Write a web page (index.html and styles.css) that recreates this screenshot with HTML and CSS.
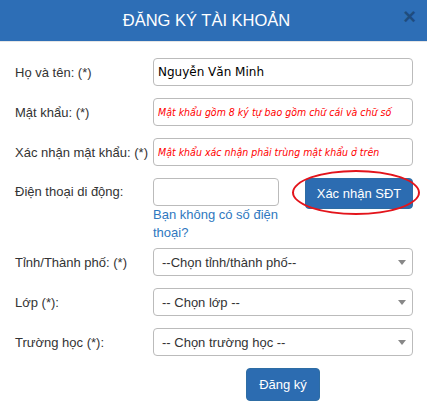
FILE: index.html
```html
<!DOCTYPE html>
<html lang="vi">
<head>
  <meta charset="UTF-8">
  <title>Đăng ký tài khoản</title>
  <link rel="stylesheet" href="styles.css">
</head>
<body>
  <div class="modal">
    <div class="modal-header">
      <h4 class="modal-title">ĐĂNG KÝ TÀI KHOẢN</h4>
      <button class="close" type="button">&times;</button>
    </div>
    <form class="modal-body">
      <div class="form-row">
        <label>Họ và tên: (*)</label>
        <div class="control">
          <input class="field" type="text" value="Nguyễn Văn Minh">
        </div>
      </div>
      <div class="form-row">
        <label>Mật khẩu: (*)</label>
        <div class="control">
          <input class="field hint" type="password" placeholder="Mật khẩu gồm 8 ký tự bao gồm chữ cái và chữ số">
        </div>
      </div>
      <div class="form-row">
        <label>Xác nhận mật khẩu: (*)</label>
        <div class="control">
          <input class="field hint" type="password" placeholder="Mật khẩu xác nhận phải trùng mật khẩu ở trên">
        </div>
      </div>
      <div class="form-row phone-row">
        <label>Điện thoại di động:</label>
        <div class="control phone-control">
          <div class="phone-col">
            <input class="field" type="text">
            <a href="#" class="no-phone">Bạn không có số điện thoại?</a>
          </div>
          <div class="verify-wrap">
            <button type="button" class="btn btn-primary">Xác nhận SĐT</button>
            <span class="circle-mark"></span>
          </div>
        </div>
      </div>
      <div class="form-row">
        <label>Tỉnh/Thành phố: (*)</label>
        <div class="control select-wrap">
          <select class="field">
            <option>--Chọn tỉnh/thành phố--</option>
          </select>
        </div>
      </div>
      <div class="form-row">
        <label>Lớp (*):</label>
        <div class="control select-wrap">
          <select class="field">
            <option>-- Chọn lớp --</option>
          </select>
        </div>
      </div>
      <div class="form-row">
        <label>Trường học (*):</label>
        <div class="control select-wrap">
          <select class="field">
            <option>-- Chọn trường học --</option>
          </select>
        </div>
      </div>
      <div class="form-row submit-row">
        <div class="control">
          <button type="submit" class="btn btn-primary btn-submit">Đăng ký</button>
        </div>
      </div>
    </form>
  </div>
</body>
</html>
```

FILE: styles.css
```css
* {
  box-sizing: border-box;
}
body {
  margin: 0;
  font-family: 'Liberation Sans', Arial, sans-serif;
  font-size: 13px;
  color: #333;
  background: #fff;
}
.modal {
  width: 427px;
  height: 415px;
  background: #fff;
}
.modal-header {
  position: relative;
  height: 42px;
  background: #2d6eb6;
  border-bottom: 1px solid #e5e5e5;
  display: flex;
  align-items: center;
  justify-content: center;
  padding-right: 14px;
}
.modal-title {
  margin: 0;
  font-size: 16.5px;
  font-weight: normal;
  color: #fff;
}
.close {
  position: absolute;
  right: 11px;
  top: 6px;
  padding: 0;
  border: 0;
  background: none;
  font-family: 'Liberation Sans', Arial, sans-serif;
  font-size: 22px;
  font-weight: bold;
  line-height: 1;
  color: #000;
  opacity: 0.3;
  cursor: pointer;
}
.modal-body {
  display: flex;
  flex-direction: column;
  gap: 12px;
  padding: 16px 14px 0 15px;
}
.form-row {
  display: flex;
  align-items: center;
}
.form-row label {
  width: 138px;
  flex-shrink: 0;
}
.control {
  flex: 1;
  position: relative;
}
.field {
  display: block;
  width: 100%;
  height: 28px;
  padding: 3px 4px;
  border: 1px solid #bbb;
  border-radius: 4px;
  font-family: 'DejaVu Sans', Tahoma, sans-serif;
  font-size: 12px;
  color: #000;
  background: #fff;
}
.hint::placeholder {
  color: #f00;
  font-style: italic;
  font-family: 'DejaVu Sans Condensed', Tahoma, sans-serif;
  font-size: 10.5px;
}
.phone-row {
  align-items: flex-start;
}
.phone-row label {
  margin-top: 6px;
}
.phone-control {
  display: flex;
  gap: 26px;
}
.phone-col {
  width: 126px;
}
.no-phone {
  display: block;
  color: #2f78c0;
  text-decoration: none;
  line-height: 18px;
}
.verify-wrap {
  position: relative;
}
.btn {
  border: 1px solid #2e6da4;
  border-radius: 4px;
  font-family: 'Liberation Sans', Arial, sans-serif;
  font-size: 13px;
  cursor: pointer;
}
.btn-primary {
  background: #2c6cb1;
  color: #fff;
}
.verify-wrap .btn {
  width: 108px;
  height: 31px;
}
.circle-mark {
  position: absolute;
  left: -13px;
  top: -8px;
  width: 128px;
  height: 45px;
  border: 2px solid #e3141b;
  border-radius: 50%;
  pointer-events: none;
}
.select-wrap select {
  appearance: none;
  -webkit-appearance: none;
  font-family: 'Liberation Sans', Arial, sans-serif;
  font-size: 13px;
  color: #333;
  padding-left: 8px;
}
.select-wrap::after {
  content: "";
  position: absolute;
  right: 7px;
  top: 12px;
  border-left: 4px solid transparent;
  border-right: 4px solid transparent;
  border-top: 5px solid #888;
  pointer-events: none;
}
.phone-row + .form-row {
  margin-top: -6px;
}
.submit-row .control {
  display: flex;
  justify-content: center;
  padding-left: 138px;
}
.btn-submit {
  width: 74px;
  height: 33px;
}
```
